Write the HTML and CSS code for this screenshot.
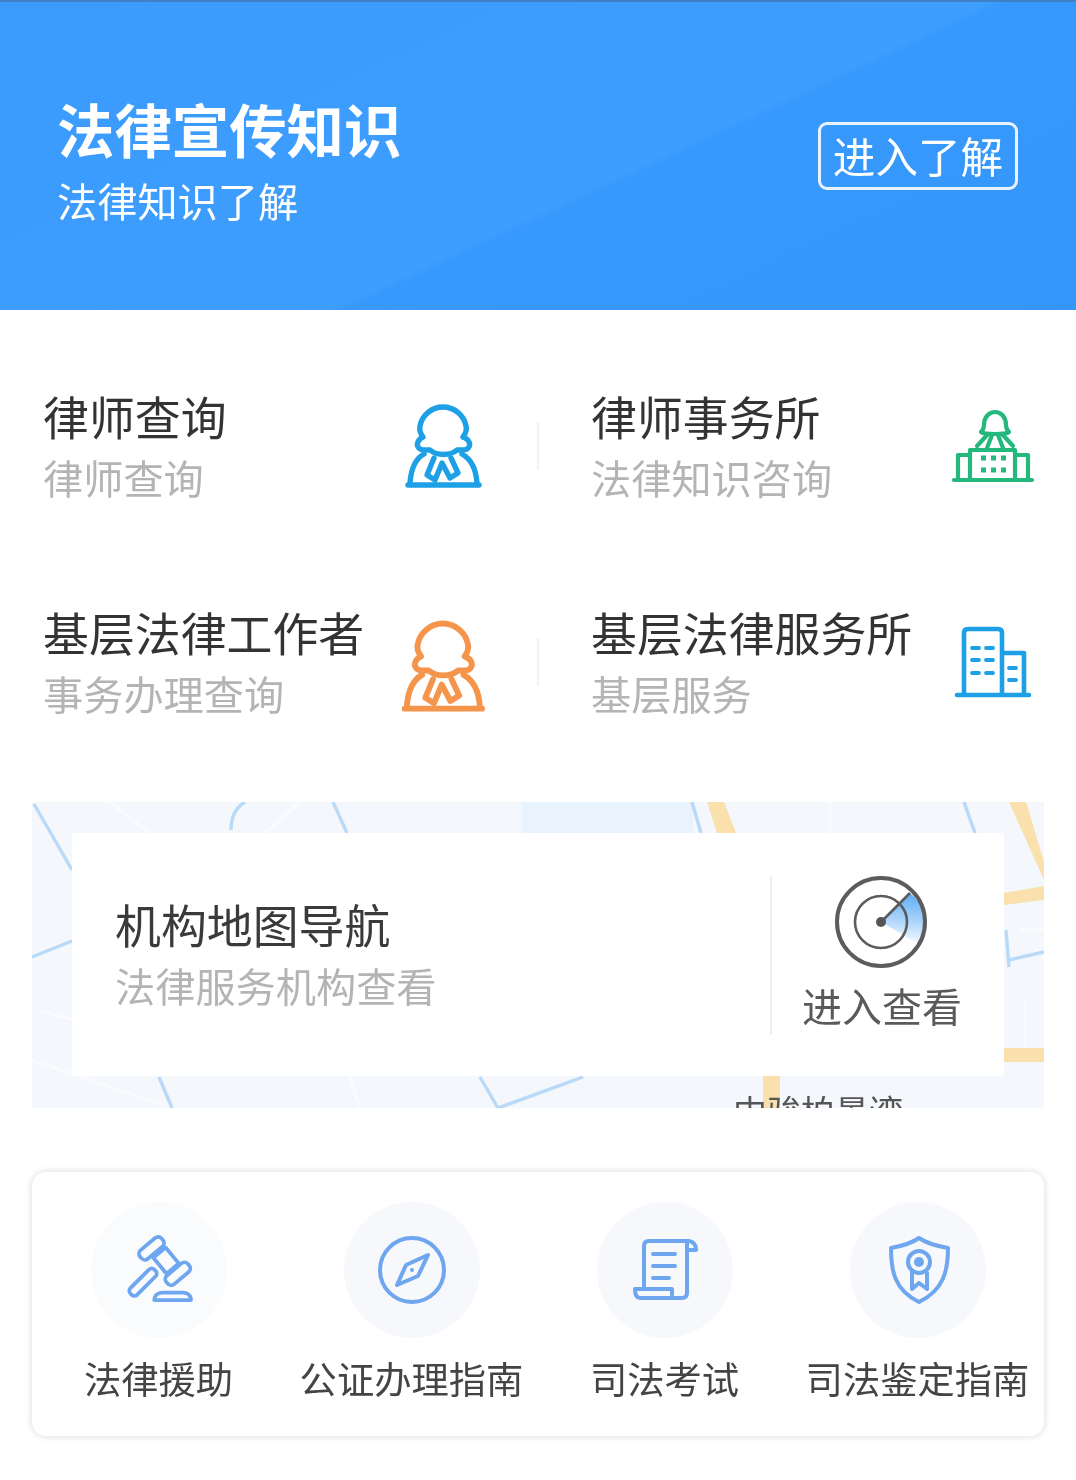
FILE: index.html
```html
<!DOCTYPE html>
<html lang="zh-CN">
<head>
<meta charset="utf-8">
<title>法律宣传知识</title>
<link rel="stylesheet" href="styles.css">
</head>
<body>
<svg class="defs" width="0" height="0" aria-hidden="true">
  <defs>
    <g id="judge">
      <path d="M40 60H34C29 60 26 56 28 52C29 49 31 48 33 47C30 43 29 40 30 36C32 25 42 17 53 17C64 17 74 25 76 36C77 40 76 43 73 47C75 48 78 49 79 52C81 56 78 60 73 60H67C60 66 47 66 40 60Z"/>
      <path d="M34 64C25 69 21 79 20 93M72 64C81 69 86 79 87 93M18 95H89"/>
      <path d="M44 68L37 85L45 90L52 73L60 88L68 83L61 68"/>
    </g>
    <linearGradient id="sweep" x1="0.5" y1="0" x2="0.4" y2="1">
      <stop offset="0" stop-color="#5eaef8"/>
      <stop offset="0.5" stop-color="#a9d2fa"/>
      <stop offset="1" stop-color="#ffffff"/>
    </linearGradient>
  </defs>
</svg>

<header class="hero">
  <div class="hero-text">
    <h1 class="hero-title">法律宣传知识</h1>
    <p class="hero-sub">法律知识了解</p>
  </div>
  <a class="hero-btn">进入了解</a>
</header>

<section class="services">
  <div class="service">
    <div class="service-text">
      <h2 class="service-title">律师查询</h2>
      <p class="service-sub">律师查询</p>
    </div>
    <div class="service-icon">
      <svg class="ico-judge-blue" width="110" height="110" viewBox="0 0 110 110"><use href="#judge"/></svg>
    </div>
  </div>
  <div class="service service-right">
    <div class="service-text">
      <h2 class="service-title">律师事务所</h2>
      <p class="service-sub">法律知识咨询</p>
    </div>
    <div class="service-icon">
      <svg class="ico-court" width="100" height="100" viewBox="3 0 100 100">
        <path d="M44 26C44 18 49 13 55 13C61 13 66 18 66 26C66 29 67 31 69 33C67 35 62 35 55 35C48 35 43 35 41 33C43 31 44 29 44 26Z"/>
        <path d="M48 35L37 47M52 36L47 49M58 36L63 49M62 35L73 47"/>
        <path d="M30 80V51H75V80M30 56H18V80M75 56H88V80M14 81H92"/>
        <path class="dots" d="M41 59h5M51 59h5M61 59h5M41 71h5M51 71h5M61 71h5"/>
      </svg>
    </div>
  </div>
  <div class="service">
    <div class="service-text">
      <h2 class="service-title">基层法律工作者</h2>
      <p class="service-sub">事务办理查询</p>
    </div>
    <div class="service-icon">
      <svg class="ico-judge-orange" width="120" height="120" viewBox="0 0 110 110"><use href="#judge"/></svg>
    </div>
  </div>
  <div class="service service-right">
    <div class="service-text">
      <h2 class="service-title">基层法律服务所</h2>
      <p class="service-sub">基层服务</p>
    </div>
    <div class="service-icon">
      <svg class="ico-office" width="100" height="90" viewBox="2 0 100 90">
        <path d="M23 78V17Q23 13 27 13H57Q61 13 61 17V78M61 37H83V78M16 79H88"/>
        <path class="dots" d="M31 32h7M45 32h7M31 44h7M45 44h7M31 57h7M45 57h7M68 52h7M68 64h7"/>
      </svg>
    </div>
  </div>
</section>

<section class="map">
  <svg class="map-bg" width="1012" height="306" viewBox="32 802 1012 306" aria-hidden="true">
    <rect x="32" y="802" width="1012" height="306" fill="#f4f7fb"/>
    <rect x="522" y="802" width="171" height="31" fill="#e8f3fd"/>
    <g class="map-white">
      <path d="M110 802L210 880M172 1108L32 1060M300 802L265 833M830 802V833M350 1077L360 1108M1020 930H1044M1025 1000V1048M40 1010L72 1020"/>
    </g>
    <g class="map-water">
      <path d="M34 804L72 870M245 802C235 808 231 818 231 830M333 802L347 833M692 802L701 833M964 802L975 833M1006 930L1009 967M1009 960L1044 952M32 957L72 941M159 1077L172 1108M480 1077L498 1108L583 1077"/>
    </g>
    <g class="map-road">
      <polygon points="707,802 724,802 736,833 717,833"/>
      <polygon points="1009,802 1026,802 1044,862 1044,880"/>
      <polygon points="1004,893 1044,886 1044,900 1004,905"/>
      <rect x="1004" y="1048" width="40" height="14"/>
      <rect x="763" y="1076" width="17" height="32"/>
    </g>
  </svg>
  <div class="map-card">
    <div class="map-text">
      <h2 class="service-title map-title">机构地图导航</h2>
      <p class="service-sub">法律服务机构查看</p>
    </div>
    <div class="map-action">
      <svg width="94" height="94" viewBox="14 10 94 94">
        <path class="radar-sweep" d="M61 57L90 28A41 41 0 0 1 100 80Z" fill="url(#sweep)"/>
        <circle class="radar-ring" cx="61" cy="57" r="44"/>
        <circle class="radar-inner" cx="61" cy="57" r="26"/>
        <path class="radar-inner" d="M61 57L90 28"/>
        <circle class="radar-dot" cx="61" cy="57" r="5"/>
      </svg>
      <span class="map-action-label">进入查看</span>
    </div>
  </div>
  <span class="map-place">中骏柏景湾</span>
</section>

<section class="guides">
  <div class="guide">
    <div class="guide-circle guide-circle-faint">
      <svg class="ico-guide" width="94" height="94" viewBox="28 30 100 100">
        <rect x="55" y="51" width="30" height="12" rx="5" transform="rotate(-40 70 57)"/>
        <rect x="83" y="78" width="30" height="12" rx="5" transform="rotate(-40 98 84)"/>
        <path d="M72 67L85 56L99 73L86 84Z"/>
        <rect x="43" y="88" width="36" height="10" rx="4" transform="rotate(-45 61 93)"/>
        <path d="M73 112C73 106 78 104 82 104H103C108 104 112 107 112 112Z"/>
      </svg>
    </div>
    <span class="guide-label">法律援助</span>
  </div>
  <div class="guide">
    <div class="guide-circle">
      <svg class="ico-guide" width="100" height="100" viewBox="27 30 100 100">
        <circle cx="77" cy="80" r="32"/>
        <path d="M93 65L83 86L62 95L71 75Z"/>
        <circle class="ico-fill" cx="77" cy="80" r="2"/>
      </svg>
    </div>
    <span class="guide-label">公证办理指南</span>
  </div>
  <div class="guide">
    <div class="guide-circle">
      <svg class="ico-guide" width="100" height="100" viewBox="30 30 100 100">
        <path d="M59 98V56Q59 51 64 51H104Q111 52 111 60H102V103Q102 108 97 108H55Q50 108 50 99H87V105"/>
        <path d="M102 51Q102 54 102 60M68 64H90M68 76H90M68 88H84"/>
      </svg>
    </div>
    <span class="guide-label">司法考试</span>
  </div>
  <div class="guide">
    <div class="guide-circle">
      <svg class="ico-guide" width="100" height="100" viewBox="28 30 100 100">
        <path d="M79 48C72 53 62 56 51 58C51 80 54 100 79 112C104 100 108 80 108 58C97 56 86 53 79 48Z"/>
        <circle cx="79" cy="72" r="11"/>
        <circle class="ico-fill" cx="79" cy="72" r="5"/>
        <path d="M72 83V99L79 93L87 99V83"/>
      </svg>
    </div>
    <span class="guide-label">司法鉴定指南</span>
  </div>
</section>
</body>
</html>
```
FILE: styles.css
```css
* { box-sizing: border-box; }

html, body {
  margin: 0;
  padding: 0;
  background: #fff;
}

body {
  width: 1076px;
  height: 1480px;
  overflow: hidden;
  font-family: "Noto Sans CJK SC", "Noto Sans", sans-serif;
}

h1, h2, p { margin: 0; font-weight: 400; }

.defs { position: absolute; }

/* The reference is a soft, upscaled capture */
.hero-text, .hero-btn, .service, .map, .guides { filter: blur(0.5px); }

/* Hero */
.hero {
  height: 310px;
  border-top: 2px solid #3f7fc4;
  padding: 0 58px 0 57px;
  display: flex;
  justify-content: space-between;
  align-items: center;
  color: #fff;
  background: linear-gradient(155deg, #3a9bfd 0%, #3d9efe 57%, #3799fc 58%, #3596fa 100%);
}

.hero-text { padding-top: 17px; }

.hero-title {
  font-size: 57.4px;
  line-height: 71px;
  font-weight: 700;
}

.hero-sub {
  font-size: 40.2px;
  line-height: 72px;
}

.hero-btn {
  width: 200px;
  height: 68px;
  border: 3px solid #e8f3ff;
  border-radius: 9px;
  font-size: 42.6px;
  line-height: 60px;
  text-align: center;
}

/* Services */
.services {
  display: grid;
  grid-template-columns: 538px 538px;
  grid-auto-rows: 216px;
  padding-top: 31px;
}

.service {
  position: relative;
  display: flex;
  align-items: center;
  justify-content: space-between;
  padding: 0 43px 0 43px;
}

.service-right { padding: 0 33px 0 53px; }

.service-right::before {
  content: "";
  position: absolute;
  left: -1px;
  top: 81px;
  width: 2px;
  height: 48px;
  background: #eff1f3;
}

.service-text { padding-bottom: 6px; }

.service-title {
  font-size: 45.9px;
  line-height: 62px;
  color: #333;
  white-space: nowrap;
}

.service-sub {
  font-size: 40.2px;
  line-height: 62px;
  color: #b4b4b4;
  white-space: nowrap;
}

.service-icon {
  flex: none;
  width: 100px;
  display: flex;
  justify-content: center;
  align-items: center;
}

.service-icon svg { flex: none; }

.service-icon svg path {
  fill: none;
  stroke-linecap: round;
  stroke-linejoin: round;
}

.ico-judge-blue, .ico-judge-orange {
  fill: none;
  stroke-width: 5.4;
  stroke-linejoin: round;
  stroke-linecap: round;
}

.ico-judge-blue { stroke: #1ea0e6; margin-bottom: 8px; }
.ico-judge-orange { stroke: #f5944b; }

.ico-court path { stroke: #25b87c; stroke-width: 4.2; }
.ico-office { margin-bottom: 8px; }
.ico-office path { stroke: #1ea0e6; stroke-width: 4.6; }
.ico-court .dots { stroke-width: 5; stroke-linecap: butt; }
.ico-office .dots { stroke-width: 3.8; }

/* Map */
.map {
  position: relative;
  width: 1012px;
  height: 306px;
  margin: 29px 0 0 32px;
  overflow: hidden;
  padding: 31px 40px 32px;
}

.map-bg {
  position: absolute;
  left: 0;
  top: 0;
}

.map-white path { fill: none; stroke: #f9fbfe; stroke-width: 3; }
.map-water path { fill: none; stroke: #b8daf8; stroke-width: 3.4; }
.map-road polygon, .map-road rect { fill: #f9e0ac; }

.map-card {
  position: relative;
  z-index: 1;
  height: 243px;
  background: #fff;
  display: flex;
  align-items: center;
  justify-content: space-between;
  padding: 0 12px 0 43px;
}

.map-text { padding-bottom: 2px; }

.map-title { color: #3a3a3a; }

.map-action {
  width: 222px;
  height: 158px;
  border-left: 2px solid #eeeeee;
  display: flex;
  flex-direction: column;
  align-items: center;
  gap: 11px;
}

.map-action svg { flex: none; margin: -1px 2px 0 0; }

.map-action-label {
  font-size: 40px;
  line-height: 50px;
  color: #5a5a5a;
}

.radar-ring, .radar-inner { fill: none; stroke: #5c5c5c; }
.radar-ring { stroke-width: 4; }
.radar-inner { stroke-width: 2.6; }
.radar-dot { fill: #555; }

.map-place {
  position: absolute;
  left: 701px;
  top: 289px;
  font-size: 34px;
  line-height: 40px;
  color: #555;
  white-space: nowrap;
}

/* Guides */
.guides {
  width: 1012px;
  height: 264px;
  margin: 64px 0 0 32px;
  padding-top: 30px;
  border-radius: 14px;
  background: #fff;
  box-shadow: 0 0 7px rgba(0, 0, 0, 0.16);
  display: grid;
  grid-template-columns: repeat(4, 1fr);
}

.guide {
  display: flex;
  flex-direction: column;
  align-items: center;
  gap: 15px;
}

.guide-circle {
  width: 136px;
  height: 136px;
  border-radius: 50%;
  background: #f7f8fb;
  display: flex;
  align-items: center;
  justify-content: center;
}

.guide-circle-faint { background: #fafbfd; }

.guide-circle svg { flex: none; }

.ico-guide {
  fill: none;
  stroke: #6ea6ef;
  stroke-width: 4;
  stroke-linecap: round;
  stroke-linejoin: round;
}

.ico-guide .ico-fill { fill: #6ea6ef; stroke: none; }

.guide-label {
  font-size: 37.3px;
  line-height: 50px;
  color: #444;
  white-space: nowrap;
}
```
